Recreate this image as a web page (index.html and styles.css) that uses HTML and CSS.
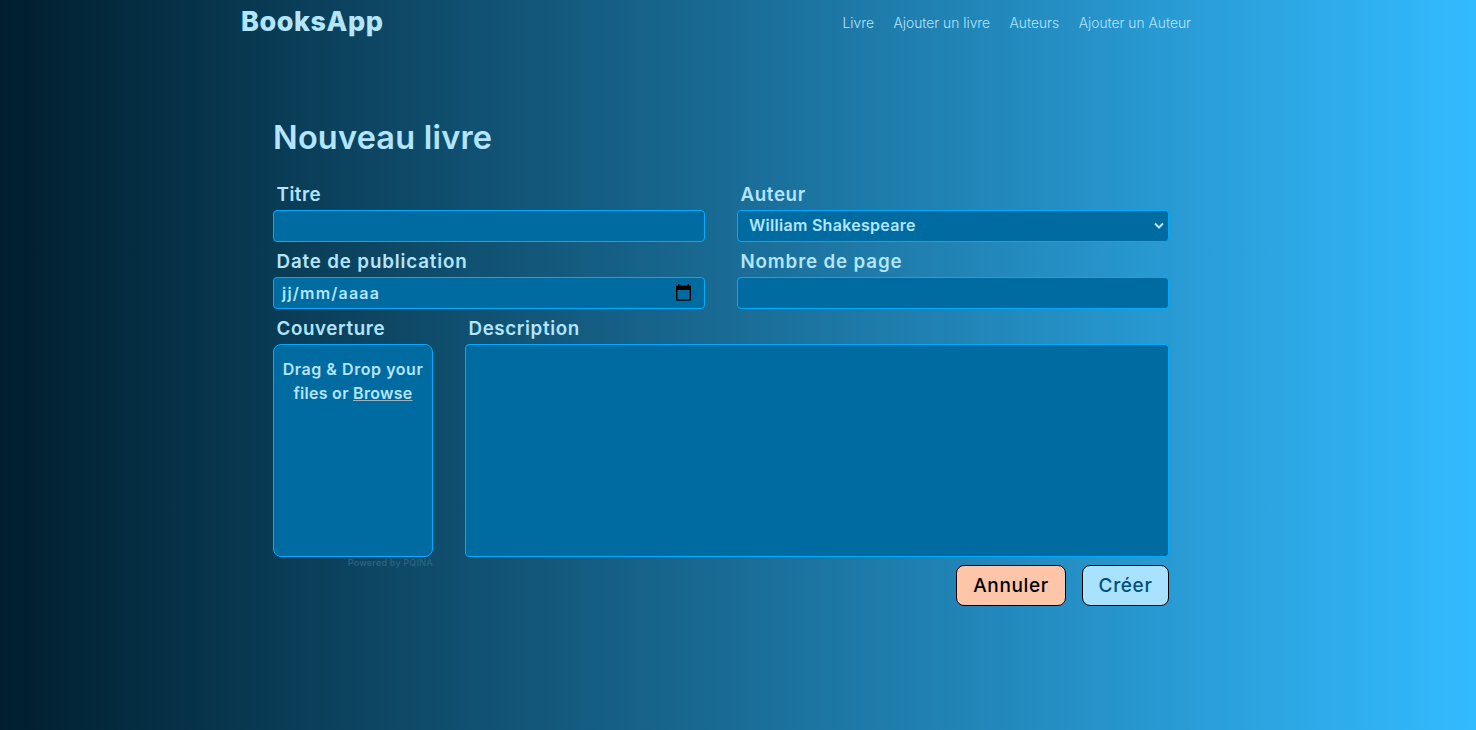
FILE: index.html
```html
<!DOCTYPE html>
<html lang="fr">
<head>
<meta charset="utf-8">
<title>BooksApp</title>
<link rel="stylesheet" href="styles.css">
</head>
<body>
<header class="navbar">
  <a class="brand">BooksApp</a>
  <nav class="links">
    <a>Livre</a><a>Ajouter un livre</a><a>Auteurs</a><a>Ajouter un Auteur</a>
  </nav>
</header>
<main class="page">
  <h1 class="title">Nouveau livre</h1>
  <form class="form">
    <div class="row">
      <div class="field"><label class="short" for="titre">Titre</label><input class="control" id="titre" type="text"></div>
      <div class="field"><label for="auteur">Auteur</label>
        <div class="control picker"><select class="select" id="auteur"><option>William Shakespeare</option></select>
          <svg width="10" height="8" viewBox="0 0 10 8"><path d="M1 1.500l4 4 4-4" fill="none" stroke="#b3e5ff" stroke-width="2"/></svg>
        </div>
      </div>
    </div>
    <div class="row">
      <div class="field"><label class="long">Date de publication</label>
        <div class="control date"><span>jj/mm/aaaa</span>
          <svg width="15" height="17" viewBox="0 0 15 17"><path fill="#000" fill-rule="evenodd" d="M2 0h1.500v1.500h8V0H13v1.500h.8A1.200 1.200 0 0 1 15 2.700V15.500A1.300 1.300 0 0 1 13.700 16.800H1.300A1.300 1.300 0 0 1 0 15.500V2.700A1.200 1.200 0 0 1 1.200 1.500H2zM1.400 6v9.400h12.200V6z"/></svg>
        </div>
      </div>
      <div class="field"><label class="long" for="pages">Nombre de page</label><input class="control" id="pages" type="text"></div>
    </div>
    <div class="row">
      <div class="cover"><label>Couverture</label>
        <div class="drop"><span class="hint">Drag &amp; Drop your</span><br><span class="browse">files or <u>Browse</u></span></div>
        <div class="credit">Powered by PQINA</div>
      </div>
      <div class="description"><label for="desc">Description</label><textarea class="area" id="desc"></textarea></div>
    </div>
    <div class="actions"><button class="btn cancel" type="button">Annuler</button><button class="btn create" type="button">Créer</button></div>
  </form>
</main>
</body>
</html>
```
FILE: styles.css
```css
* { box-sizing: border-box; }
body {
  margin: 0;
  min-height: 100vh;
  background: linear-gradient(90deg, #001e2e, #33bbff);
  color: #b3e5ff;
  font-family: Inter, "Open Sans", sans-serif;
}
.navbar {
  display: flex;
  justify-content: space-between;
  align-items: center;
  width: 950px;
  height: 44px;
  margin-left: 241px;
}
.brand { padding-bottom: 1px; font-size: 27px; font-weight: 800; line-height: 42px; letter-spacing: .55px; }
.links { display: flex; gap: 19.500px; padding-top: 1px; font-size: 13.800px; font-weight: 300; }
.page { width: 896px; margin: 72px 0 0 273px; }
.title { margin: 0; padding-top: 1px; font-size: 32.500px; font-weight: 600; line-height: 42px; letter-spacing: .2px; }
.form { display: flex; flex-direction: column; padding-top: 20px; }
.row { display: flex; gap: 32px; height: 67px; }
.row:nth-child(3) { height: auto; }
.field { flex: 0 0 432px; }
label {
  display: block;
  height: 31px;
  padding-left: 3.500px;
  font-size: 18.800px;
  font-weight: 600;
  line-height: 31px;
  letter-spacing: .6px;
}
.long { letter-spacing: .83px; }
.short { letter-spacing: .5px; }
.control {
  display: block;
  width: 100%;
  height: 32px;
  border: 1px solid #00aaff;
  border-radius: 4px;
  background: #006ba0;
  color: #b3e5ff;
  font: 600 16px Inter, sans-serif;
  outline: 0;
}
.picker { display: flex; align-items: center; padding-right: 4px; }
.select {
  flex: 1;
  height: 30px;
  padding: 0 0 2px 11px;
  border: 0;
  background: none;
  color: inherit;
  font: inherit;
  letter-spacing: .28px;
  appearance: none;
  outline: 0;
}
.date { display: flex; justify-content: space-between; align-items: center; padding: 0 13px 0 8px; }
.date span { letter-spacing: 1.200px; }
.date svg { margin-bottom: 1px; }
.cover { width: 160px; }
.drop {
  height: 213px;
  padding-top: 12px;
  border: 1px solid #00aaff;
  border-radius: 8px;
  background: #006ba0;
  font-size: 16px;
  font-weight: 600;
  line-height: 24px;
  text-align: center;
  white-space: nowrap;
}
.hint { letter-spacing: .55px; }
.browse { letter-spacing: .28px; }
.drop u { text-decoration-thickness: 1px; text-decoration-color: #9ab4c2; }
.credit { height: 8px; font-size: 9px; font-weight: 600; line-height: 12px; letter-spacing: .2px; text-align: right; color: #2b617f; white-space: nowrap; }
.description { width: 704px; }
.area { display: block; width: 100%; height: 213px; border: 1px solid #00aaff; border-radius: 4px; background: #006ba0; resize: none; }
.actions { display: flex; justify-content: flex-end; gap: 16px; }
.btn { height: 41px; border: 1px solid #000; border-radius: 8px; padding: 0; font: 500 19px Inter, sans-serif; letter-spacing: .65px; }
.cancel { width: 110px; background: #ffc5a8; color: #000; }
.create { width: 87px; background: #a8e2ff; color: #00507a; }
```
